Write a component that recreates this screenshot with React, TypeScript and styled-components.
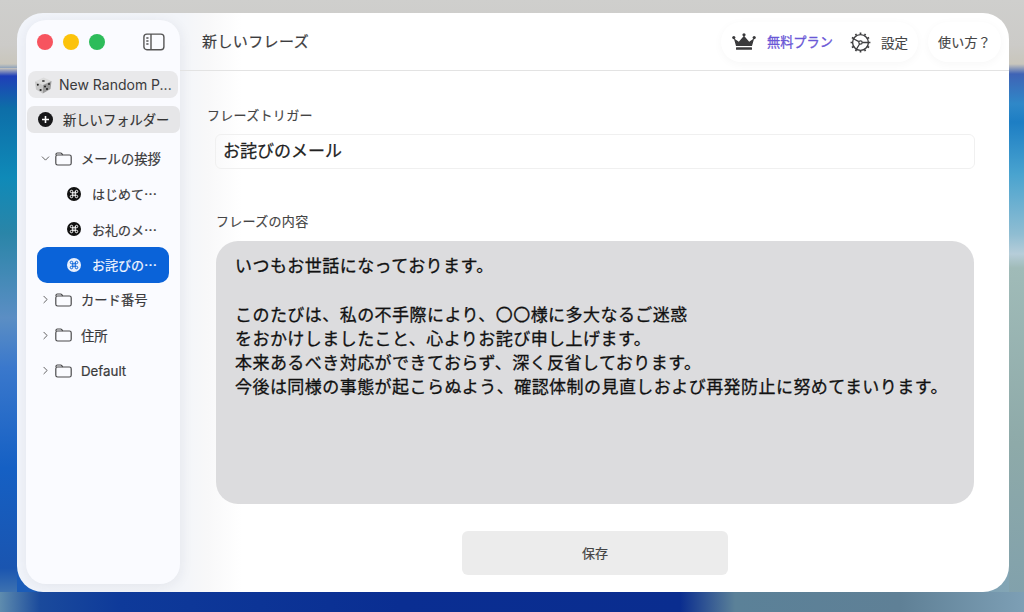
import React from "react";
import styled, { createGlobalStyle } from "styled-components";
import { ChevronDown, ChevronRight, Command } from "lucide-react";

const Global = createGlobalStyle`
  html, body { margin: 0; padding: 0; width: 1024px; height: 612px; overflow: hidden; }
  * { box-sizing: border-box; }
  body { font-family: Inter, "Noto Sans CJK JP", "Liberation Sans", sans-serif; }
`;

const Desktop = styled.div`
  position: relative;
  width: 1024px;
  height: 612px;
  padding: 13px 15px 20px 17px;
  display: flex;
  background:
    linear-gradient(180deg, #cfcfcd 0, #cccbc8 45px, #c9c6bc 64px, rgba(200,198,190,0) 76px),
    linear-gradient(90deg, #1b5cb8 0, #1b5cb8 50%, #86a7b4 100%);
`;

const LeftGlow = styled.div`
  position: absolute;
  left: 0;
  top: 68px;
  width: 17px;
  height: 544px;
  background: linear-gradient(180deg, #c9c6bc 0, #1f3fb8 8px, #0d6ea8 40px, #0f8ab8 110px, #2a85a8 165px, #5b8ec4 250px, #3a78cc 300px, #1560c4 400px, #1a55b0 500px, #5c8ab0 544px);
`;

const RightGlow = styled.div`
  position: absolute;
  right: 0;
  top: 64px;
  width: 15px;
  height: 548px;
  background: linear-gradient(180deg, #c9c6bc 0, #3f63b5 10px, #2f88c8 40px, #1d7ec4 58px, #49a3cf 110px, #8fbdd2 170px, #b6cdd9 190px, #a0bbb8 204px, #8eaaa9 380px, #80a0ac 548px);
`;

const BottomBand = styled.div`
  position: absolute;
  left: 0;
  right: 0;
  bottom: 0;
  height: 20px;
  background: linear-gradient(90deg, #5f8cae 0, #1a4a9c 40px, #0e3a9a 120px, #0a2e92 400px, #0a2d8f 680px, #5b8198 735px, #5f8096 900px, #7d9fb5 1024px);
`;

const Window = styled.div`
  position: relative;
  z-index: 1;
  flex: 1;
  display: flex;
  border-radius: 26px;
  overflow: hidden;
  background: linear-gradient(90deg, #f2f5fb 0, #f3f5f9 165px, #f8f8f9 190px, #fff 225px);
`;

const Sidebar = styled.aside`
  width: 154px;
  margin: 7px 0 8px 9px;
  border-radius: 20px;
  background: #fafbff;
  box-shadow: 0 2px 14px rgba(40, 40, 60, 0.08);
  display: flex;
  flex-direction: column;
  flex-shrink: 0;
`;

const SideTop = styled.div`
  height: 51px;
  display: flex;
  align-items: center;
  justify-content: space-between;
  padding: 0 15px 8px 11px;
`;

const Lights = styled.div`
  display: flex;
  gap: 10px;
`;

const Light = styled.span<{ $c: string }>`
  width: 16px;
  height: 16px;
  border-radius: 50%;
  background: ${(p) => p.$c};
`;

const PhraseRow = styled.div`
  height: 27px;
  margin: 0 2px;
  padding-left: 5px;
  display: flex;
  align-items: center;
  gap: 6px;
  border-radius: 8px;
  background: #e9e9eb;
  color: #3a3a3c;
  font-size: 14px;
  white-space: nowrap;
`;

const FolderButton = styled.div`
  height: 27px;
  margin: 8px 0 0 1px;
  padding: 0 0 1px 11px;
  display: flex;
  align-items: center;
  gap: 10px;
  border-radius: 7px;
  background: #e6e6e8;
  color: #333;
  font-size: 13.3px;
  -webkit-text-stroke: 0.15px currentColor;
`;

const Tree = styled.div`
  margin-top: 8.5px;
  display: grid;
  grid-auto-rows: 35.33px;
`;

const FolderRow = styled.div`
  margin: 0 11px;
  padding: 0 0 1px 2px;
  display: flex;
  align-items: center;
  gap: 3px;
  color: #3a3a3c;
  font-size: 13.3px;
  -webkit-text-stroke: 0.2px currentColor;
  svg { flex-shrink: 0; }
`;

const FolderName = styled.span`
  margin-left: 6px;
`;

const Leaf = styled.div<{ $active?: boolean }>`
  margin: 0 11px;
  padding: 0 0 1px 30px;
  display: flex;
  align-items: center;
  gap: 11px;
  border-radius: 10px;
  font-size: 13px;
  -webkit-text-stroke: 0.2px currentColor;
  background: ${(p) => (p.$active ? "#0a63d9" : "transparent")};
  color: ${(p) => (p.$active ? "#f2f6ff" : "#3a3a3c")};
`;

const KeyBadge = styled.span<{ $active?: boolean }>`
  width: 14px;
  height: 14px;
  border-radius: 50%;
  flex-shrink: 0;
  display: flex;
  align-items: center;
  justify-content: center;
  background: ${(p) => (p.$active ? "#e8effc" : "#111")};
  color: ${(p) => (p.$active ? "#0a63d9" : "#fff")};
`;

const Main = styled.main`
  flex: 1;
  min-width: 0;
  display: flex;
  flex-direction: column;
`;

const Header = styled.header`
  height: 58px;
  flex-shrink: 0;
  padding: 9px 8px 0 22px;
  display: flex;
  align-items: flex-start;
  border-bottom: 1px solid #e3e3e3;
`;

const Title = styled.h1`
  margin: 10px auto 0 0;
  color: #3c3c3e;
  font-size: 15px;
  font-weight: 400;
  letter-spacing: 0.4px;
  line-height: 20px;
  -webkit-text-stroke: 0.2px currentColor;
`;

const Pill = styled.div`
  height: 40px;
  border-radius: 20px;
  background: #fff;
  box-shadow: 0 2px 10px rgba(0, 0, 0, 0.035);
  display: flex;
  align-items: center;
  color: #444;
  font-size: 13px;
`;

const PlanPill = styled(Pill)`
  width: 197px;
  padding-left: 11px;
`;

const HelpPill = styled(Pill)`
  width: 73px;
  margin-left: 10px;
  padding-bottom: 2px;
  justify-content: center;
  letter-spacing: 0.3px;
  -webkit-text-stroke: 0.15px currentColor;
`;

const Plan = styled.span`
  margin: 0 17px 0 11px;
  padding-bottom: 1px;
  color: #6a57d6;
  font-size: 13.2px;
  -webkit-text-stroke: 0.3px currentColor;
`;

const Setting = styled.span`
  margin-left: 10px;
  padding-bottom: 1px;
  font-size: 13.5px;
  -webkit-text-stroke: 0.15px currentColor;
`;

const Body = styled.div`
  flex: 1;
  display: flex;
  flex-direction: column;
  padding: 35px 34px 17px 27px;
`;

const Label = styled.label<{ $inset?: number }>`
  display: block;
  margin-left: ${(p) => p.$inset ?? 0}px;
  color: #444;
  font-size: 13px;
  letter-spacing: 0.3px;
  line-height: 18px;
  -webkit-text-stroke: 0.15px currentColor;
`;

const Trigger = styled.div`
  height: 35px;
  margin: 10px 0 0 8px;
  padding: 0 0 5px 7px;
  border: 1px solid #f0f0f0;
  border-radius: 6px;
  display: flex;
  align-items: center;
  color: #222;
  font-size: 17px;
  -webkit-text-stroke: 0.25px currentColor;
`;

const ContentLabel = styled(Label)`
  margin-top: 43px;
`;

const Content = styled.div`
  height: 263px;
  margin: 11px 1px 0 9px;
  padding: 13px 19px;
  border-radius: 22px;
  background: #dcdcde;
  color: #111;
  font-size: 17px;
  letter-spacing: 0.45px;
  line-height: 24.3px;
  white-space: pre-line;
  -webkit-text-stroke: 0.3px currentColor;
`;

const Save = styled.button`
  width: 266px;
  height: 44px;
  margin: 27px 0 0 255px;
  padding: 0 0 2px;
  border: none;
  border-radius: 6px;
  background: #ececec;
  color: #444;
  font-family: inherit;
  font-size: 13px;
  -webkit-text-stroke: 0.2px currentColor;
`;

const PanelIcon = () => (
  <svg width="22" height="18" viewBox="0 0 22 18" fill="none" stroke="#555" strokeWidth="1.4">
    <rect x="0.9" y="1.1" width="20" height="15.6" rx="3" />
    <path d="M8 1.1v15.6" />
    <path d="M3.3 5h2.2M3.3 8h2.2M3.3 11h2.2" strokeWidth="1.3" />
  </svg>
);

const Dice = () => (
  <svg width="20" height="20" viewBox="0 0 20 20">
    <path d="M2 6.5 10.5 2.5 18.5 6 10 10Z" fill="#dcdcdc" />
    <path d="M2 6.5 10 10 9.8 18.5 3 14.5Z" fill="#c6c6c6" />
    <path d="M10 10 18.5 6 17.5 14 9.8 18.5Z" fill="#9a9a9a" />
    <g fill="#222">
      <circle cx="4.8" cy="9.8" r="1" />
      <circle cx="7.6" cy="15" r="1.1" />
      <circle cx="14" cy="14" r="1.1" />
      <circle cx="16" cy="9" r="1" />
      <circle cx="12" cy="11.6" r="1" />
    </g>
    <ellipse cx="10.4" cy="6" rx="1.5" ry="0.9" fill="#555" />
  </svg>
);

const PlusBadge = () => (
  <svg width="15" height="15" viewBox="0 0 15 15">
    <circle cx="7.5" cy="7.5" r="7.5" fill="#18181a" />
    <path d="M7.5 4v7M4 7.5h7" stroke="#fff" strokeWidth="1.6" />
  </svg>
);

const FolderIcon = () => (
  <svg width="17" height="14" viewBox="0 0 17 14" fill="none" stroke="#4a4a4c" strokeWidth="1.2">
    <path d="M1 3V2.4C1 1.6 1.6 1 2.4 1h3.2c.5 0 .9.2 1.2.6L7.7 3" />
    <rect x="0.8" y="3" width="15.4" height="10" rx="1.8" />
  </svg>
);

const Crown = () => (
  <svg width="24" height="18" viewBox="0 0 24 18" fill="#3a3a3c">
    <path d="M1.8 5.2 6.8 8.8 12 2.8 17.2 8.8 22.2 5.2 20 13H4Z" />
    <circle cx="1.8" cy="4.6" r="1.6" />
    <circle cx="12" cy="1.8" r="1.6" />
    <circle cx="22.2" cy="4.6" r="1.6" />
    <rect x="4" y="14.2" width="16" height="2.6" rx="0.6" />
  </svg>
);

const Gear = () => {
  const teeth = Array.from({ length: 12 }, (_, i) => i * 30);
  return (
    <svg width="21" height="21" viewBox="0 0 21 21" fill="none" stroke="#3f3f41">
      <circle cx="10.5" cy="10.5" r="7.9" strokeWidth="1.4" />
      <circle cx="10.5" cy="10.5" r="1.7" strokeWidth="1.2" />
      <path d="M3 6.5 8.9 9.6M12.2 10.5H18M9.6 12 6 17.8" strokeWidth="1.3" />
      {teeth.map((a) => (
        <path key={a} d="M10.5 0.6v2" strokeWidth="1.7" transform={`rotate(${a} 10.5 10.5)`} />
      ))}
    </svg>
  );
};

const Key = ({ active }: { active?: boolean }) => (
  <KeyBadge $active={active}>
    <Command size={10} strokeWidth={2.4} />
  </KeyBadge>
);

const message = `いつもお世話になっております。

このたびは、私の不手際により、〇〇様に多大なるご迷惑
をおかけしましたこと、心よりお詫び申し上げます。
本来あるべき対応ができておらず、深く反省しております。
今後は同様の事態が起こらぬよう、確認体制の見直しおよび再発防止に努めてまいります。`;

export default function App() {
  return (
    <Desktop>
      <Global />
      <LeftGlow />
      <RightGlow />
      <BottomBand />
      <Window>
        <Sidebar>
          <SideTop>
            <Lights>
              <Light $c="#f7545f" />
              <Light $c="#fcc30b" />
              <Light $c="#2dbc5a" />
            </Lights>
            <PanelIcon />
          </SideTop>
          <PhraseRow>
            <Dice />
            New Random P...
          </PhraseRow>
          <FolderButton>
            <PlusBadge />
            新しいフォルダー
          </FolderButton>
          <Tree>
            <FolderRow>
              <ChevronDown size={13} color="#555" strokeWidth={1.7} />
              <FolderIcon />
              <FolderName>メールの挨拶</FolderName>
            </FolderRow>
            <Leaf><Key />はじめて⋯</Leaf>
            <Leaf><Key />お礼のメ⋯</Leaf>
            <Leaf $active><Key active />お詫びの⋯</Leaf>
            {["カード番号", "住所", "Default"].map((name) => (
              <FolderRow key={name}>
                <ChevronRight size={13} color="#555" strokeWidth={1.7} />
                <FolderIcon />
                <FolderName>{name}</FolderName>
              </FolderRow>
            ))}
          </Tree>
        </Sidebar>
        <Main>
          <Header>
            <Title>新しいフレーズ</Title>
            <PlanPill>
              <Crown />
              <Plan>無料プラン</Plan>
              <Gear />
              <Setting>設定</Setting>
            </PlanPill>
            <HelpPill>使い方？</HelpPill>
          </Header>
          <Body>
            <Label>フレーズトリガー</Label>
            <Trigger>お詫びのメール</Trigger>
            <ContentLabel $inset={9}>フレーズの内容</ContentLabel>
            <Content>{message}</Content>
            <Save>保存</Save>
          </Body>
        </Main>
      </Window>
    </Desktop>
  );
}
